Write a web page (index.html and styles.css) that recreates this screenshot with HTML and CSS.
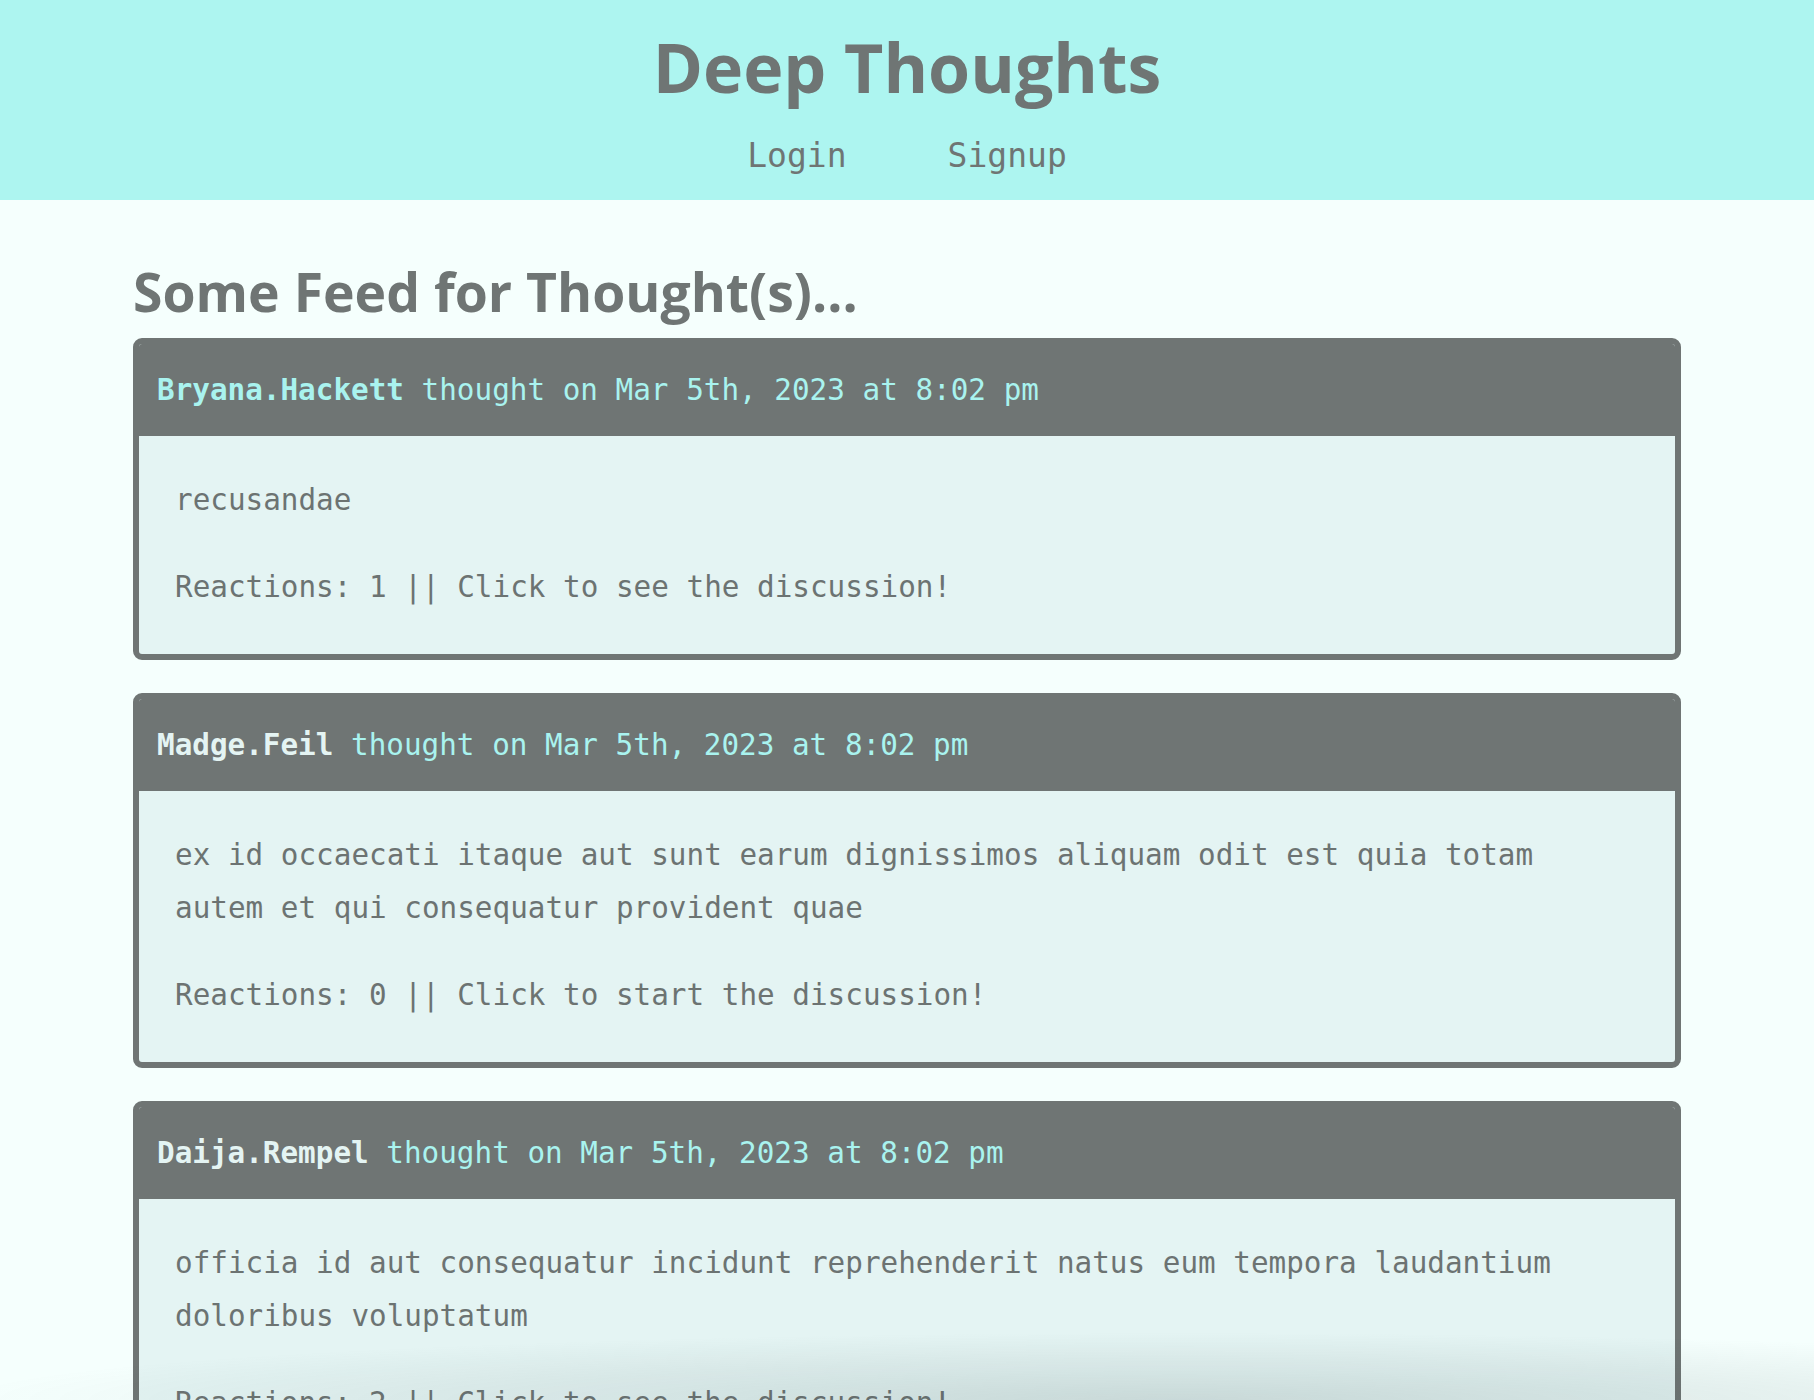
FILE: index.html
```html
<!DOCTYPE html>
<html lang="en">
<head>
<meta charset="utf-8">
<title>Deep Thoughts</title>
<link rel="stylesheet" href="styles.css">
</head>
<body>
<header class="site-header">
  <h1 class="site-title">Deep Thoughts</h1>
  <nav class="site-nav">
    <a class="nav-link" href="#">Login</a>
    <a class="nav-link" href="#">Signup</a>
  </nav>
</header>
<main class="feed">
  <h2 class="feed-title">Some Feed for Thought(s)…</h2>

  <article class="card">
    <div class="card-header"><span class="username">Bryana.Hackett</span> thought on Mar 5th, 2023 at 8:02 pm</div>
    <div class="card-body">
      <p class="thought">recusandae</p>
      <p class="reactions">Reactions: 1 || Click to see the discussion!</p>
    </div>
  </article>

  <article class="card">
    <div class="card-header"><span class="username visited">Madge.Feil</span> thought on Mar 5th, 2023 at 8:02 pm</div>
    <div class="card-body">
      <p class="thought">ex id occaecati itaque aut sunt earum dignissimos aliquam odit est quia totam autem et qui consequatur provident quae</p>
      <p class="reactions">Reactions: 0 || Click to start the discussion!</p>
    </div>
  </article>

  <article class="card">
    <div class="card-header"><span class="username visited">Daija.Rempel</span> thought on Mar 5th, 2023 at 8:02 pm</div>
    <div class="card-body">
      <p class="thought">officia id aut consequatur incidunt reprehenderit natus eum tempora laudantium doloribus voluptatum</p>
      <p class="reactions">Reactions: 2 || Click to see the discussion!</p>
    </div>
  </article>
</main>
<div class="window-shadow"></div>
</body>
</html>
```
FILE: styles.css
```css
html, body {
  margin: 0;
  padding: 0;
}

body {
  background: #f5fffd;
  color: #6f7574;
  font-family: "DejaVu Sans Mono", "Liberation Mono", monospace;
  overflow: hidden;
}

.site-header {
  background: #adf5f0;
  height: 200px;
  box-sizing: border-box;
  padding-top: 25px;
  display: flex;
  flex-direction: column;
  align-items: center;
}

.site-title {
  margin: 0;
  font-family: "Open Sans", "Lato", sans-serif;
  font-weight: 700;
  font-size: 68px;
  line-height: 84px;
  color: #6f7574;
}

.site-nav {
  margin-top: 27px;
  display: flex;
  gap: 101px;
}

.nav-link {
  font-family: "DejaVu Sans Mono", monospace;
  font-size: 33px;
  line-height: 40px;
  color: #6f7574;
  text-decoration: none;
}

.feed {
  width: 1548px;
  margin: 0 auto;
}

.feed-title {
  margin: 58px 0 13px;
  font-family: "Open Sans", "Lato", sans-serif;
  font-weight: 700;
  font-size: 53.5px;
  line-height: 67px;
  color: #6f7574;
}

.card {
  border: 6px solid #6f7574;
  border-radius: 9px;
  margin-bottom: 33px;
  overflow: hidden;
  background: #e4f4f3;
}

.card-header {
  background: #6f7574;
  color: #a9f3ef;
  font-size: 29.3px;
  line-height: 52px;
  padding: 20px 18px 20px;
  white-space: nowrap;
}

.username {
  font-weight: 700;
  color: #a9f3ef;
}

.username.visited {
  color: #e4f4f3;
}

.card-body {
  padding: 38px 100px 40px 36px;
  font-size: 29.3px;
  line-height: 53px;
  color: #6c7372;
  display: flex;
  flex-direction: column;
  gap: 34px;
}

.card-body p {
  margin: 0;
}

.window-shadow {
  position: fixed;
  left: 0;
  right: 0;
  bottom: 0;
  height: 90px;
  pointer-events: none;
  background: radial-gradient(ellipse 90% 100% at 65% 100%, rgba(60, 80, 80, 0.16), rgba(60, 80, 80, 0) 75%);
}
```
